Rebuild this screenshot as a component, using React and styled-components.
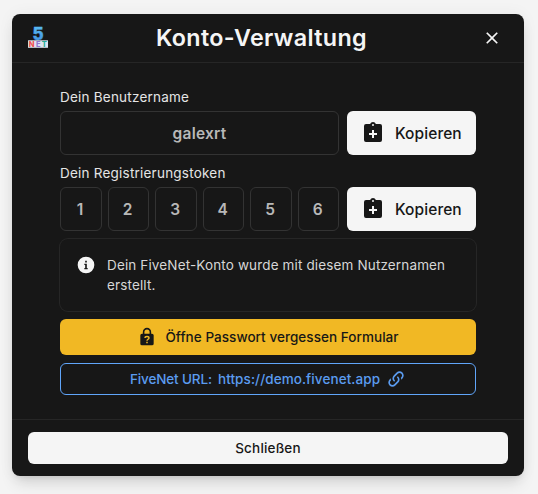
import React from 'react';
import styled, { createGlobalStyle } from 'styled-components';

const GlobalStyle = createGlobalStyle`
  *, *::before, *::after { box-sizing: border-box; }
  body {
    margin: 0;
    background: #f4f4f4;
    font-family: Inter, "Liberation Sans", sans-serif;
    font-size: 13.5px;
    line-height: 20px;
    color: #e5e5e5;
    overflow: hidden;
  }
`;

const Page = styled.main`
  padding: 14px 14px 18px 12px;
`;

const Dialog = styled.section`
  display: flex;
  flex-direction: column;
  height: 462px;
  border-radius: 8px;
  background: #171717;
  box-shadow: 0 0 16px rgba(0, 0, 0, 0.05), 0 10px 15px -3px rgba(0, 0, 0, 0.12), 0 4px 6px -4px rgba(0, 0, 0, 0.12);
`;

const Header = styled.header`
  display: grid;
  grid-template-columns: 20px 1fr 20px;
  align-items: center;
  height: 49px;
  padding: 0 22px 0 16px;
  border-bottom: 1px solid #262626;
`;

const Title = styled.h1`
  margin: 0 7px 0 0;
  color: #f5f5f5;
  font-size: 23.3px;
  font-weight: 600;
  line-height: 32px;
  letter-spacing: 0.36px;
  text-align: center;
`;

const CloseButton = styled.button`
  display: flex;
  padding: 0;
  border: 0;
  background: none;
  color: #f5f5f5;
`;

const Body = styled.div`
  display: flex;
  flex: 1;
  flex-direction: column;
  gap: 8px;
  padding: 24px 48px;
`;

const Field = styled.div`
  display: flex;
  flex-direction: column;
  gap: 4px;
`;

const Label = styled.span`
  font-weight: 400;
  letter-spacing: 0.22px;
`;

const FieldRow = styled.div`
  display: grid;
  grid-template-columns: 279px 129px;
  gap: 8px;
  height: 44px;
`;

const Value = styled.div`
  display: flex;
  align-items: center;
  justify-content: center;
  height: 44px;
  padding-top: 2px;
  border: 1px solid #333333;
  border-radius: 6px;
  color: #b8b8b8;
  font-size: 15.5px;
  font-weight: 600;
  letter-spacing: 0.22px;
`;

const Pins = styled.div`
  display: grid;
  grid-template-columns: repeat(6, 1fr);
  gap: 6px;

  ${Value} { padding-right: 1px; }
`;

const CopyButton = styled.button`
  display: flex;
  align-items: center;
  gap: 10px;
  padding: 0 14px;
  border: 0;
  border-radius: 6px;
  background: #f5f5f5;
  color: #171717;
  font: 500 15.5px/20px Inter, sans-serif;
  letter-spacing: 0.08px;

  span { padding-top: 1px; }
`;

const Notice = styled.div`
  display: flex;
  gap: 11px;
  height: 72px;
  padding: 16px;
  border-radius: 8px;
  box-shadow: 0 0 0 1px #262626;
  color: #d6d6d6;
  letter-spacing: 0.14px;

  svg { color: #f5f5f5; }
  p { flex: 1; margin: 0; }
`;

const ActionButton = styled.button`
  display: flex;
  align-items: center;
  justify-content: center;
  gap: ${(p) => p.$gap || '8px'};
  width: 100%;
  height: ${(p) => p.$height || '32px'};
  padding: 0;
  border: ${(p) => (p.$outline ? '1px solid #60a5fa' : '0')};
  border-radius: 6px;
  background: ${(p) => p.$bg || 'transparent'};
  color: ${(p) => (p.$outline ? '#5b9cf0' : '#171717')};
  font: 500 13.5px/20px Inter, sans-serif;
  letter-spacing: ${(p) => p.$track || '0.05px'};
`;

const UrlText = styled.span`
  letter-spacing: -0.13px;
`;

const Footer = styled.footer`
  padding: 12px 16px;
  border-top: 1px solid #262626;
`;

const Glyph = styled.svg`
  display: block;
  flex: none;
  width: ${(p) => p.$size || 20}px;
  height: ${(p) => p.$size || 20}px;
  fill: currentColor;
`;

const Icon = ({ d, size }) => (
  <Glyph $size={size} viewBox="0 0 24 24" aria-hidden="true">
    <path d={d} fillRule="evenodd" />
  </Glyph>
);

const icons = {
  close: 'M19,6.41L17.59,5L12,10.59L6.41,5L5,6.41L10.59,12L5,17.59L6.41,19L12,13.41L17.59,19L19,17.59L13.41,12L19,6.41Z',
  clipboard:
    'M19,3H14.82C14.4,1.84 13.3,1 12,1C10.7,1 9.6,1.84 9.18,3H5A2,2 0 0,0 3,5V19A2,2 0 0,0 5,21H19A2,2 0 0,0 21,19V5A2,2 0 0,0 19,3M12,3A1,1 0 0,1 13,4A1,1 0 0,1 12,5A1,1 0 0,1 11,4A1,1 0 0,1 12,3M16,14H13V17H11V14H8V12H11V9H13V12H16V14Z',
  info: 'M12,2A10,10 0 1,0 12,22A10,10 0 1,0 12,2M11,7H13V9H11V7M10,10.5H13V15.5H14V17H10V15.5H11V12H10Z',
  link: 'M10.59,13.41C11,13.8 11,14.44 10.59,14.83C10.2,15.22 9.56,15.22 9.17,14.83C7.22,12.88 7.22,9.71 9.17,7.76L12.71,4.22C14.66,2.27 17.83,2.27 19.78,4.22C21.73,6.17 21.73,9.34 19.78,11.29L18.29,12.78C18.3,11.96 18.17,11.14 17.89,10.36L18.36,9.88C19.54,8.71 19.54,6.81 18.36,5.64C17.19,4.46 15.29,4.46 14.12,5.64L10.59,9.17C9.41,10.34 9.41,12.24 10.59,13.41M13.41,9.17C13.8,8.78 14.44,8.78 14.83,9.17C16.78,11.12 16.78,14.29 14.83,16.24L11.29,19.78C9.34,21.73 6.17,21.73 4.22,19.78C2.27,17.83 2.27,14.66 4.22,12.71L5.71,11.22C5.7,12.04 5.83,12.86 6.11,13.65L5.64,14.12C4.46,15.29 4.46,17.19 5.64,18.36C6.81,19.54 8.71,19.54 9.88,18.36L13.41,14.83C14.59,13.66 14.59,11.76 13.41,10.59C13,10.2 13,9.56 13.41,9.17Z',
};

const LockQuestion = () => (
  <Glyph viewBox="0 0 24 24" aria-hidden="true">
    <path
      fillRule="evenodd"
      d="M12,1A5,5 0 0,0 7,6V8H6A2,2 0 0,0 4,10V20A2,2 0 0,0 6,22H18A2,2 0 0,0 20,20V10A2,2 0 0,0 18,8H17V6A5,5 0 0,0 12,1M12,2.9A3.1,3.1 0 0,1 15.1,6V8H8.9V6A3.1,3.1 0 0,1 12,2.9"
    />
    <path d="M9.6 13.1C9.6 10.7 14.4 10.7 14.4 13.1C14.4 14.7 12 14.7 12 16.6" fill="none" stroke="#f1b824" strokeWidth="1.7" />
    <rect x="11.1" y="17.7" width="1.8" height="1.8" fill="#f1b824" />
  </Glyph>
);

const LogoSvg = styled.svg`
  display: block;
  width: 20px;
  height: 20px;
  overflow: visible;
  font-family: Inter, sans-serif;
  font-weight: 800;
  text-anchor: middle;
`;

const Logo = () => (
  <LogoSvg viewBox="0 0 20 20" aria-label="FiveNet">
    <defs>
      <linearGradient id="five" x1="0" y1="0" x2="0" y2="1">
        <stop offset="0" stopColor="#5cc0f4" />
        <stop offset="1" stopColor="#3d8ce0" />
      </linearGradient>
    </defs>
    <text x="10" y="12.3" fontSize="17" fill="url(#five)" stroke="url(#five)" strokeWidth="0.4">5</text>
    <rect x="0" y="12.3" width="20" height="7.5" fill="#dce5f2" />
    <g fontSize="7.5">
      <text x="3.6" y="18.8" fill="#f0524f">N</text>
      <text x="10.2" y="18.8" fill="#9277d2">E</text>
      <text x="16.3" y="18.8" fill="#26ad98">T</text>
    </g>
  </LogoSvg>
);

const Copy = () => (
  <CopyButton>
    <Icon d={icons.clipboard} size={24} />
    <span>Kopieren</span>
  </CopyButton>
);

export default function App() {
  return (
    <Page>
      <GlobalStyle />
      <Dialog role="dialog">
        <Header>
          <Logo />
          <Title>Konto-Verwaltung</Title>
          <CloseButton aria-label="Schließen">
            <Icon d={icons.close} />
          </CloseButton>
        </Header>
        <Body>
          <Field>
            <Label>Dein Benutzername</Label>
            <FieldRow>
              <Value>galexrt</Value>
              <Copy />
            </FieldRow>
          </Field>
          <Field>
            <Label>Dein Registrierungstoken</Label>
            <FieldRow>
              <Pins>
                {[1, 2, 3, 4, 5, 6].map((n) => (
                  <Value key={n}>{n}</Value>
                ))}
              </Pins>
              <Copy />
            </FieldRow>
          </Field>
          <Notice>
            <Icon d={icons.info} />
            <p>Dein FiveNet-Konto wurde mit diesem Nutzernamen erstellt.</p>
          </Notice>
          <ActionButton $bg="#f1b824" $height="36px">
            <LockQuestion />
            Öffne Passwort vergessen Formular
          </ActionButton>
          <ActionButton $outline $track="0.08px" $gap="6px">
            <UrlText>FiveNet URL:</UrlText>
            https://demo.fivenet.app
            <Icon d={icons.link} />
          </ActionButton>
        </Body>
        <Footer>
          <ActionButton $bg="#f5f5f5" $track="0.18px">Schließen</ActionButton>
        </Footer>
      </Dialog>
    </Page>
  );
}
